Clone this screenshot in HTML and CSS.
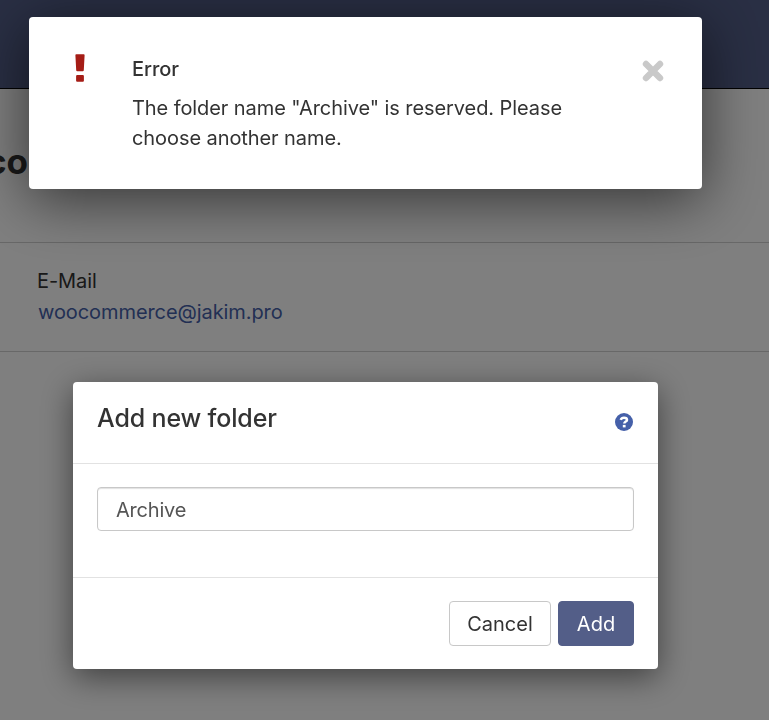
FILE: index.html
```html
<!DOCTYPE html>
<html lang="en">
<head>
  <meta charset="UTF-8">
  <meta name="viewport" content="width=device-width, initial-scale=1.0">
  <title>Add new folder</title>
  <link rel="stylesheet" href="styles.css">
</head>
<body>
  <header class="topbar"></header>
  <main>
    <div class="page-title">
      <h1>co</h1>
    </div>
    <div class="contact-row">
      <div class="label">E-Mail</div>
      <a class="email" href="#">woocommerce@jakim.pro</a>
    </div>
  </main>

  <div class="backdrop">
    <div class="modal" role="dialog">
      <div class="modal-header">
        <h2>Add new folder</h2>
        <svg class="help-icon" viewBox="0 0 18 18">
          <circle cx="9" cy="9" r="9" fill="#4560a9"/>
          <path d="M5.700 6.900C6.300 5.300 7.500 4.700 9 4.700c1.700 0 3 .9 3 2.200 0 1.700-2.700 1.700-2.700 3.700" fill="none" stroke="#fff" stroke-width="2.500"/>
          <rect x="7.800" y="11.900" width="2.800" height="2.500" fill="#fff"/>
        </svg>
      </div>
      <div class="modal-body">
        <input type="text" class="folder-name" value="Archive">
      </div>
      <div class="modal-footer">
        <button class="btn">Cancel</button>
        <button class="btn btn-primary">Add</button>
      </div>
    </div>
  </div>

  <div class="alert" role="alert">
    <svg class="error-icon" viewBox="0 0 10 28">
      <path d="M1.300 0.300h7.400q1 0 .9 1l-.8 15q-.1 1-1 1H2.200q-.9 0-1-1L.4 1.300q-.1-1 .9-1z" fill="#a51d16"/>
      <rect x="1.100" y="21" width="7.800" height="6.700" rx="1" fill="#a51d16"/>
    </svg>
    <div class="alert-text">
      <h3>Error</h3>
      <p>The folder name "Archive" is reserved. Please<br>choose another name.</p>
    </div>
    <svg class="close-icon" viewBox="0 0 22 22">
      <path d="M4 4l14 14M18 4L4 18" stroke="#c9c9c9" stroke-width="6.400" stroke-linecap="round"/>
    </svg>
  </div>
</body>
</html>
```

FILE: styles.css
```css
/* General Styles */
* {
  box-sizing: border-box;
}

body {
  font-family: Inter, 'Liberation Sans', sans-serif;
  font-size: 20px;
  letter-spacing: -0.08px;
  color: #333;
  background-color: #fff;
  margin: 0;
  height: 720px;
  overflow: hidden;
}

h1, h2, h3, p {
  margin: 0;
}

/* Page behind the dialogs */
.topbar {
  height: 89px;
  background-color: #535e88;
  border-bottom: 1px solid #000;
}

.page-title {
  height: 154px;
  padding-top: 50px;
  border-bottom: 1px solid #d0d0d0;
}

.page-title h1 {
  font-size: 35px;
  line-height: 44px;
  margin-left: -14px;
}

.contact-row {
  height: 109px;
  padding: 23px 37px 0;
  border-bottom: 1px solid #d0d0d0;
  line-height: 31px;
}

.email {
  margin-left: 1px;
  color: #4560a9;
  text-decoration: none;
}

.backdrop {
  position: fixed;
  inset: 0;
  background: rgba(0, 0, 0, 0.5);
}

/* Folder dialog */
.modal {
  width: 585px;
  margin: 382px 0 0 73px;
  background: white;
  border-radius: 4px;
  box-shadow: 0 8px 32px rgba(0, 0, 0, 0.5);
}

.modal-header {
  display: flex;
  justify-content: space-between;
  height: 82px;
  padding: 19px 25px 0 24px;
  border-bottom: 1px solid #e2e2e2;
}

.modal-header h2 {
  font-size: 25px;
  line-height: 34px;
  font-weight: 500;
  letter-spacing: -0.15px;
}

.help-icon {
  width: 18px;
  height: 18px;
  margin-top: 12px;
}

.modal-body {
  height: 114px;
  padding: 23px 24px 0;
  border-bottom: 1px solid #e2e2e2;
}

.folder-name {
  display: block;
  width: 100%;
  height: 44px;
  padding: 1px 18px 0;
  font: inherit;
  letter-spacing: -0.2px;
  color: #555;
  border: 1px solid #c8c8c8;
  border-radius: 4px;
  box-shadow: inset 0 1px 1px rgba(0, 0, 0, 0.12);
}

.modal-footer {
  display: flex;
  justify-content: flex-end;
  gap: 7px;
  height: 91px;
  padding: 23px 24px;
}

.btn {
  width: 102px;
  height: 45px;
  padding: 0;
  font: inherit;
  color: #333;
  background: white;
  border: 1px solid #c8c8c8;
  border-radius: 4px;
}

.btn-primary {
  width: 76px;
  color: white;
  background-color: #535e88;
  border-color: #535e88;
}

/* Error message */
.alert {
  position: fixed;
  top: 17px;
  left: 29px;
  display: flex;
  width: 673px;
  height: 172px;
  padding: 37px 38px 0 46px;
  background: white;
  border-radius: 4px;
  box-shadow: 0 10px 60px rgba(0, 0, 0, 0.6);
}

.error-icon {
  width: 10px;
  height: 28px;
}

.alert-text {
  flex: 1;
  margin-left: 47px;
}

.alert-text h3 {
  font-size: 20px;
  line-height: 30px;
  font-weight: 500;
  margin-bottom: 9px;
}

.alert-text p {
  line-height: 30px;
  white-space: nowrap;
}

.close-icon {
  width: 22px;
  height: 22px;
  margin-top: 6px;
}
```
